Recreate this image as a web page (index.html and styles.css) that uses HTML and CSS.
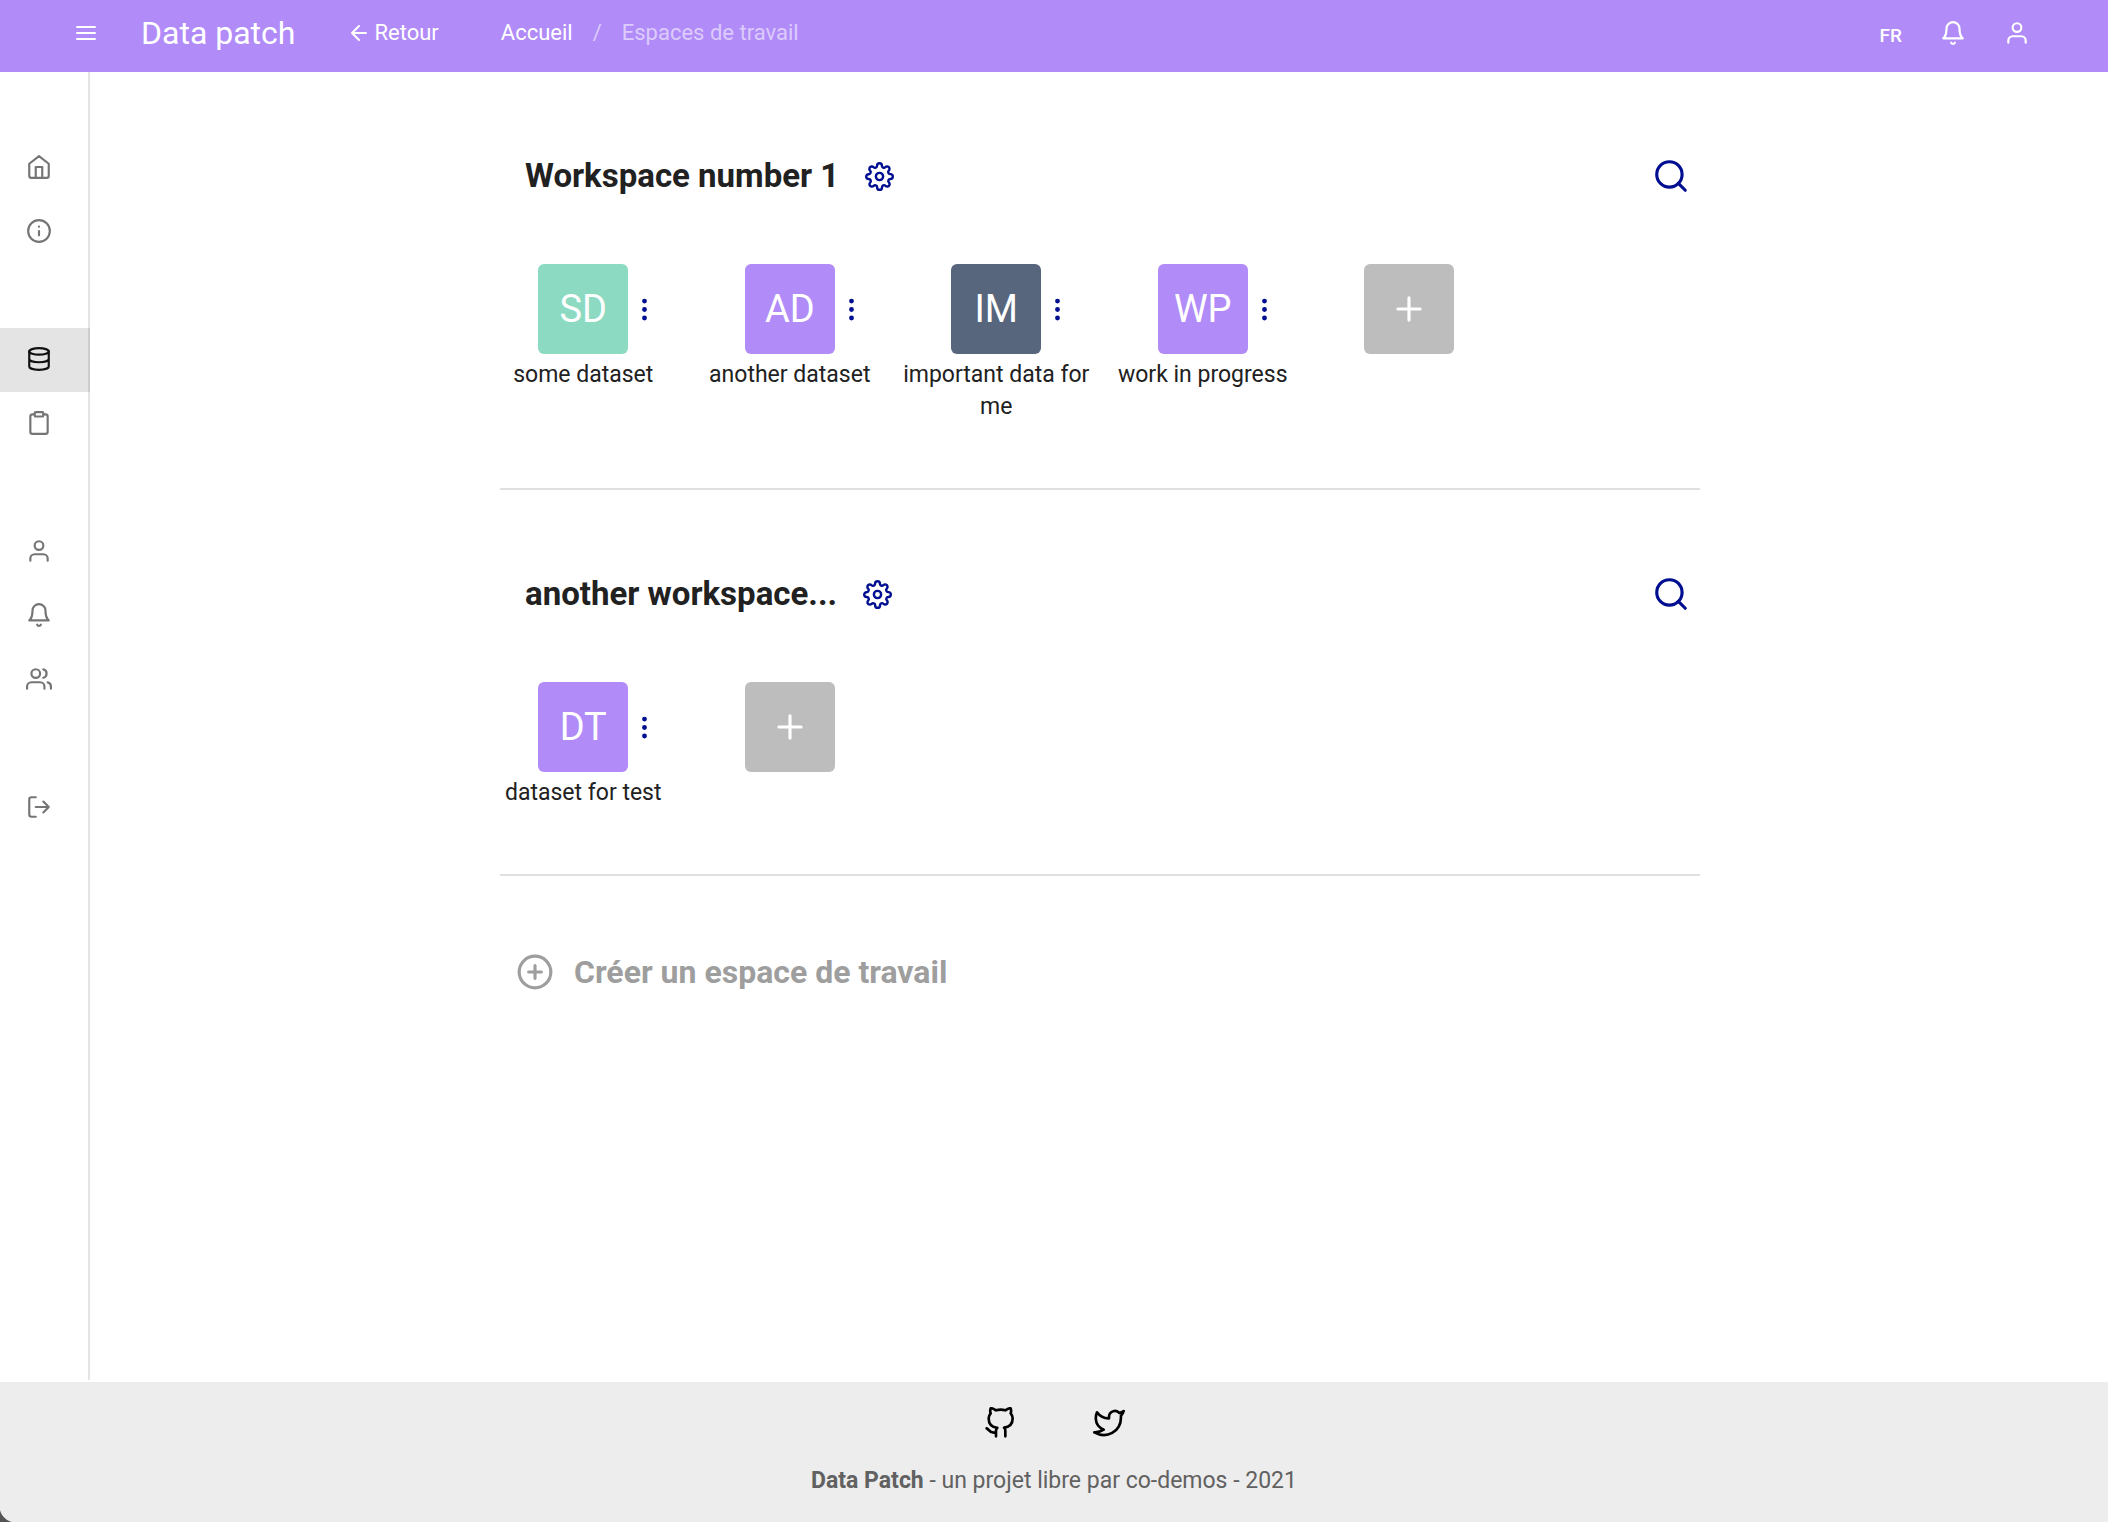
FILE: index.html
```html
<!DOCTYPE html>
<html lang="fr">
<head>
<meta charset="utf-8">
<meta name="viewport" content="width=device-width, initial-scale=1">
<title>Data patch - Espaces de travail</title>
<link rel="stylesheet" href="styles.css">
</head>
<body>
<svg class="sprite" aria-hidden="true">
  <symbol id="menu" viewBox="0 0 24 24"><path d="M3 12h18M3 6h18M3 18h18"/></symbol>
  <symbol id="arrow-left" viewBox="0 0 24 24"><path d="M19 12H5M12 19l-7-7 7-7"/></symbol>
  <symbol id="bell" viewBox="0 0 24 24"><path d="M18 8A6 6 0 0 0 6 8c0 7-3 9-3 9h18s-3-2-3-9M13.73 21a2 2 0 0 1-3.46 0"/></symbol>
  <symbol id="user" viewBox="0 0 24 24"><path d="M20 21v-2a4 4 0 0 0-4-4H8a4 4 0 0 0-4 4v2"/><circle cx="12" cy="7" r="4"/></symbol>
  <symbol id="home" viewBox="0 0 24 24"><path d="M3 9l9-7 9 7v11a2 2 0 0 1-2 2H5a2 2 0 0 1-2-2zM9 22V12h6v10"/></symbol>
  <symbol id="info" viewBox="0 0 24 24"><circle cx="12" cy="12" r="10"/><path d="M12 16v-4M12 8h.01"/></symbol>
  <symbol id="database" viewBox="0 0 24 24"><ellipse cx="12" cy="5" rx="9" ry="3"/><path d="M21 12c0 1.66-4 3-9 3s-9-1.34-9-3M3 5v14c0 1.66 4 3 9 3s9-1.34 9-3V5"/></symbol>
  <symbol id="clipboard" viewBox="0 0 24 24"><path d="M16 4h2a2 2 0 0 1 2 2v14a2 2 0 0 1-2 2H6a2 2 0 0 1-2-2V6a2 2 0 0 1 2-2h2"/><rect x="8" y="2" width="8" height="4" rx="1"/></symbol>
  <symbol id="users" viewBox="0 0 24 24"><path d="M17 21v-2a4 4 0 0 0-4-4H5a4 4 0 0 0-4 4v2M23 21v-2a4 4 0 0 0-3-3.87M16 3.13a4 4 0 0 1 0 7.75"/><circle cx="9" cy="7" r="4"/></symbol>
  <symbol id="log-out" viewBox="0 0 24 24"><path d="M9 21H5a2 2 0 0 1-2-2V5a2 2 0 0 1 2-2h4M16 17l5-5-5-5M21 12H9"/></symbol>
  <symbol id="settings" viewBox="0 0 24 24"><circle cx="12" cy="12" r="3"/><path d="M19.4 15a1.65 1.65 0 0 0 .33 1.82l.06.06a2 2 0 0 1 0 2.83 2 2 0 0 1-2.83 0l-.06-.06a1.65 1.65 0 0 0-1.82-.33 1.65 1.65 0 0 0-1 1.51V21a2 2 0 0 1-2 2 2 2 0 0 1-2-2v-.09A1.65 1.65 0 0 0 9 19.4a1.65 1.65 0 0 0-1.82.33l-.06.06a2 2 0 0 1-2.83 0 2 2 0 0 1 0-2.83l.06-.06a1.65 1.65 0 0 0 .33-1.82 1.65 1.65 0 0 0-1.51-1H3a2 2 0 0 1-2-2 2 2 0 0 1 2-2h.09A1.65 1.65 0 0 0 4.6 9a1.65 1.65 0 0 0-.33-1.82l-.06-.06a2 2 0 0 1 0-2.83 2 2 0 0 1 2.83 0l.06.06a1.65 1.65 0 0 0 1.82.33H9a1.65 1.65 0 0 0 1-1.51V3a2 2 0 0 1 2-2 2 2 0 0 1 2 2v.09a1.65 1.65 0 0 0 1 1.51 1.65 1.65 0 0 0 1.82-.33l.06-.06a2 2 0 0 1 2.83 0 2 2 0 0 1 0 2.83l-.06.06a1.65 1.65 0 0 0-.33 1.82V9a1.65 1.65 0 0 0 1.51 1H21a2 2 0 0 1 2 2 2 2 0 0 1-2 2h-.09a1.65 1.65 0 0 0-1.51 1z"/></symbol>
  <symbol id="search" viewBox="0 0 24 24"><circle cx="11" cy="11" r="8"/><path d="M21 21l-4.35-4.35"/></symbol>
  <symbol id="more" viewBox="0 0 24 24"><circle cx="12" cy="5" r="1"/><circle cx="12" cy="12" r="1"/><circle cx="12" cy="19" r="1"/></symbol>
  <symbol id="plus" viewBox="0 0 24 24"><path d="M12 5v14M5 12h14"/></symbol>
  <symbol id="plus-circle" viewBox="0 0 24 24"><circle cx="12" cy="12" r="10"/><path d="M12 8v8M8 12h8"/></symbol>
  <symbol id="github" viewBox="0 0 24 24"><path d="M9 19c-5 1.5-5-2.5-7-3m14 6v-3.87a3.37 3.37 0 0 0-.94-2.61c3.14-.35 6.44-1.54 6.44-7A5.44 5.44 0 0 0 20 4.77 5.07 5.07 0 0 0 19.91 1S18.73.65 16 2.48a13.38 13.38 0 0 0-7 0C6.27.65 5.09 1 5.09 1A5.07 5.07 0 0 0 5 4.77a5.44 5.44 0 0 0-1.5 3.78c0 5.42 3.3 6.61 6.44 7A3.37 3.37 0 0 0 9 18.13V22"/></symbol>
  <symbol id="twitter" viewBox="0 0 24 24"><path d="M23 3a10.9 10.9 0 0 1-3.14 1.53 4.48 4.48 0 0 0-7.86 3v1A10.66 10.66 0 0 1 3 4s-4 9 5 13a11.64 11.64 0 0 1-7 2c9 5 20 0 20-11.5a4.5 4.5 0 0 0-.08-.83A7.72 7.72 0 0 0 23 3z"/></symbol>
</svg>

<header class="appbar">
  <button class="icon-button" type="button" aria-label="Menu"><svg class="icon icon-menu"><use href="#menu"/></svg></button>
  <a class="brand" href="#">Data patch</a>
  <a class="back" href="#"><svg class="icon icon-back"><use href="#arrow-left"/></svg>Retour</a>
  <nav class="crumbs" aria-label="Fil d'Ariane">
    <a href="#">Accueil</a>
    <span class="crumb-separator">/</span>
    <span class="crumb-current">Espaces de travail</span>
  </nav>
  <div class="appbar-actions">
    <button class="locale" type="button">FR</button>
    <button class="icon-button" type="button" aria-label="Notifications"><svg class="icon icon-bar"><use href="#bell"/></svg></button>
    <button class="icon-button" type="button" aria-label="Compte"><svg class="icon icon-bar"><use href="#user"/></svg></button>
  </div>
</header>

<div class="shell">
  <nav class="sidebar" aria-label="Navigation">
    <div class="nav-group">
      <a class="nav-item" href="#" aria-label="Accueil"><svg class="icon icon-nav"><use href="#home"/></svg></a>
      <a class="nav-item" href="#" aria-label="À propos"><svg class="icon icon-nav"><use href="#info"/></svg></a>
    </div>
    <div class="nav-group">
      <a class="nav-item nav-item-active" href="#" aria-label="Espaces de travail" aria-current="page"><svg class="icon icon-nav"><use href="#database"/></svg></a>
      <a class="nav-item" href="#" aria-label="Tâches"><svg class="icon icon-nav"><use href="#clipboard"/></svg></a>
    </div>
    <div class="nav-group">
      <a class="nav-item" href="#" aria-label="Profil"><svg class="icon icon-nav"><use href="#user"/></svg></a>
      <a class="nav-item" href="#" aria-label="Notifications"><svg class="icon icon-nav"><use href="#bell"/></svg></a>
      <a class="nav-item" href="#" aria-label="Groupes"><svg class="icon icon-nav"><use href="#users"/></svg></a>
    </div>
    <div class="nav-group">
      <a class="nav-item" href="#" aria-label="Déconnexion"><svg class="icon icon-nav"><use href="#log-out"/></svg></a>
    </div>
  </nav>

  <main class="content">
    <section class="workspace">
      <div class="workspace-head">
        <h2 class="workspace-title">Workspace number 1</h2>
        <button class="icon-button accent" type="button" aria-label="Paramètres"><svg class="icon icon-medium"><use href="#settings"/></svg></button>
        <button class="icon-button accent search" type="button" aria-label="Rechercher"><svg class="icon icon-large"><use href="#search"/></svg></button>
      </div>
      <div class="datasets">
        <article class="dataset">
          <button class="tile tile-green" type="button">SD</button>
          <button class="icon-button accent more" type="button" aria-label="Options"><svg class="icon icon-medium"><use href="#more"/></svg></button>
          <p class="dataset-name">some dataset</p>
        </article>
        <article class="dataset">
          <button class="tile tile-purple" type="button">AD</button>
          <button class="icon-button accent more" type="button" aria-label="Options"><svg class="icon icon-medium"><use href="#more"/></svg></button>
          <p class="dataset-name">another dataset</p>
        </article>
        <article class="dataset">
          <button class="tile tile-slate" type="button">IM</button>
          <button class="icon-button accent more" type="button" aria-label="Options"><svg class="icon icon-medium"><use href="#more"/></svg></button>
          <p class="dataset-name">important data for me</p>
        </article>
        <article class="dataset">
          <button class="tile tile-purple" type="button">WP</button>
          <button class="icon-button accent more" type="button" aria-label="Options"><svg class="icon icon-medium"><use href="#more"/></svg></button>
          <p class="dataset-name">work in progress</p>
        </article>
        <div class="dataset">
          <button class="tile tile-add" type="button" aria-label="Ajouter"><svg class="icon icon-large"><use href="#plus"/></svg></button>
        </div>
      </div>
    </section>

    <section class="workspace">
      <div class="workspace-head">
        <h2 class="workspace-title">another workspace...</h2>
        <button class="icon-button accent" type="button" aria-label="Paramètres"><svg class="icon icon-medium"><use href="#settings"/></svg></button>
        <button class="icon-button accent search" type="button" aria-label="Rechercher"><svg class="icon icon-large"><use href="#search"/></svg></button>
      </div>
      <div class="datasets">
        <article class="dataset">
          <button class="tile tile-purple" type="button">DT</button>
          <button class="icon-button accent more" type="button" aria-label="Options"><svg class="icon icon-medium"><use href="#more"/></svg></button>
          <p class="dataset-name">dataset for test</p>
        </article>
        <div class="dataset">
          <button class="tile tile-add" type="button" aria-label="Ajouter"><svg class="icon icon-large"><use href="#plus"/></svg></button>
        </div>
      </div>
    </section>

    <button class="create" type="button"><svg class="icon icon-large"><use href="#plus-circle"/></svg>Créer un espace de travail</button>
  </main>
</div>

<footer class="footer">
  <div class="social">
    <a href="#" aria-label="GitHub"><svg class="icon icon-social"><use href="#github"/></svg></a>
    <a href="#" aria-label="Twitter"><svg class="icon icon-social"><use href="#twitter"/></svg></a>
  </div>
  <p class="credits"><strong>Data Patch</strong> - un projet libre par co-demos - 2021</p>
</footer>
</body>
</html>
```
FILE: styles.css
```css
* {
  box-sizing: border-box;
}

body {
  display: flex;
  flex-direction: column;
  min-height: 100vh;
  margin: 0;
  background: #fff;
  color: #212121;
  font-family: Roboto, "Liberation Sans", sans-serif;
  font-size: 23px;
  line-height: 32px;
}

h2,
p {
  margin: 0;
}

a {
  color: inherit;
  text-decoration: none;
}

button {
  padding: 0;
  border: 0;
  background: none;
  color: inherit;
  font: inherit;
  cursor: pointer;
}

.sprite {
  display: none;
}

/* Icons */
.icon {
  display: block;
  flex: none;
  fill: none;
  stroke: currentColor;
  stroke-width: 2;
  stroke-linecap: round;
  stroke-linejoin: round;
}

.icon-menu,
.icon-back {
  width: 24px;
  height: 24px;
}

.icon-bar,
.icon-nav {
  width: 26px;
  height: 26px;
}

.icon-medium {
  width: 29px;
  height: 29px;
}

.icon-social {
  width: 32px;
  height: 32px;
}

.icon-large {
  width: 38px;
  height: 38px;
}

.icon-button {
  display: flex;
  flex: none;
}

.accent {
  color: #000e91;
}

/* Top bar */
.appbar {
  display: flex;
  align-items: center;
  height: 72px;
  padding: 0 78px 6px 74px;
  background: #b18bf8;
  color: #fff;
  font-size: 22px;
}

.brand {
  margin-left: 43px;
  font-size: 32px;
}

.back {
  display: flex;
  align-items: center;
  margin-left: 52px;
  gap: 3px;
}

.crumbs {
  display: flex;
  gap: 20px;
  margin-left: 62px;
}

.crumb-separator,
.crumb-current {
  color: #dccbfc;
}

.appbar-actions {
  display: flex;
  align-items: center;
  gap: 38px;
  margin-left: auto;
}

.locale {
  padding-top: 5px;
  font-size: 19px;
  font-weight: 500;
}

/* Side navigation */
.shell {
  display: flex;
  flex: 1;
  gap: 2px;
}

.sidebar {
  display: flex;
  flex: none;
  flex-direction: column;
  gap: 64px;
  width: 90px;
  margin-bottom: 2px;
  padding-top: 64px;
  box-shadow: inset -2px 0 #e4e4e4;
  color: #757575;
}

.nav-item {
  display: flex;
  align-items: center;
  height: 64px;
  padding: 0 0 2px 26px;
}

.nav-item-active {
  background: #e4e4e4;
  box-shadow: inset -2px 0 #cdcdcd;
  color: #111;
}

/* Workspaces */
.content {
  width: 100%;
  max-width: 1200px;
  margin: 0 auto;
}

.workspace {
  padding-bottom: 65px;
  border-bottom: 2px solid #e0e0e0;
}

.workspace-head {
  display: flex;
  align-items: center;
  gap: 26px;
  padding: 84px 10px 68px 25px;
}

.workspace-title {
  font-size: 33px;
  font-weight: 700;
  line-height: 40px;
}

.search {
  margin-left: auto;
}

.datasets {
  display: grid;
  grid-template-columns: repeat(6, 1fr);
  margin: 0 -19px 0 -20px;
}

.dataset {
  display: grid;
  grid-template-columns: 1fr 90px 1fr;
  align-items: center;
  align-content: start;
  row-gap: 5px;
}

.tile {
  display: flex;
  grid-column: 2;
  align-items: center;
  justify-content: center;
  height: 90px;
  border-radius: 6px;
  color: #fff;
  font-size: 38px;
}

.tile-green {
  background: #8bdac1;
}

.tile-purple {
  background: #b18bf8;
}

.tile-slate {
  background: #57667c;
}

.tile-add {
  background: #bdbdbd;
}

.more {
  grid-column: 3;
  justify-self: start;
  margin-left: 2px;
}

.dataset-name {
  grid-column: 1 / -1;
  padding: 0 6px;
  text-align: center;
}

.create {
  display: flex;
  align-items: center;
  gap: 20px;
  margin: 76px 16px;
  color: #9e9e9e;
  font-size: 32px;
  font-weight: 700;
  line-height: 40px;
}

/* Footer */
.footer {
  padding: 25px 0;
  background: radial-gradient(circle at 16px calc(100% - 16px), #ededed 16px, #555 17px) left bottom / 16px 16px no-repeat, #ededed;
  color: #616161;
  text-align: center;
}

.social {
  display: flex;
  justify-content: center;
  gap: 77px;
  margin-bottom: 26px;
  color: #000;
}
```
